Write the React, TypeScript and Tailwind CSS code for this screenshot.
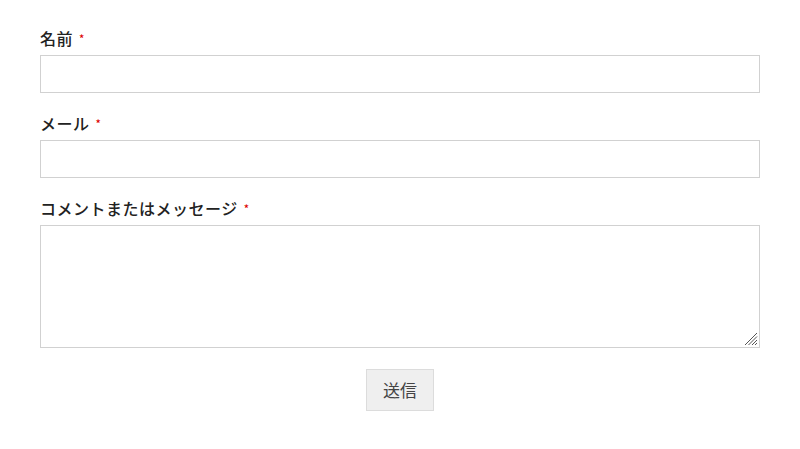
export default function App() {
  const font = { fontFamily: '"Noto Sans CJK JP", "Noto Sans", sans-serif' };
  return (
    <div className="min-h-[449px] bg-white px-10 pt-[26px]" style={font}>
      <form className="flex flex-col" onSubmit={(e) => e.preventDefault()}>
        <Label text="名前" />
        <input type="text" className="mb-[18px] h-[38px] w-full border border-[#d1d1d1] bg-white px-2 outline-none" />
        <Label text="メール" />
        <input type="email" className="mb-[18px] h-[38px] w-full border border-[#d1d1d1] bg-white px-2 outline-none" />
        <Label text="コメントまたはメッセージ" />
        <div className="relative">
          <textarea className="block h-[123px] w-full resize-none border border-[#d1d1d1] bg-white px-2 outline-none" />
          {/* resize grip */}
          <svg
            className="pointer-events-none absolute bottom-[2px] right-[2px]"
            width="14"
            height="14"
            viewBox="0 0 14 14"
            stroke="#555"
            strokeWidth="1"
          >
            <line x1="13" y1="1" x2="1" y2="13" />
            <line x1="13" y1="4.5" x2="4.5" y2="13" />
            <line x1="13" y1="8" x2="8" y2="13" />
            <line x1="13" y1="11" x2="11" y2="13" />
          </svg>
        </div>
        <div className="mt-[21px] flex justify-center">
          <button
            type="submit"
            className="h-[42px] w-[68px] border border-[#dcdcdc] bg-[#efefef] text-[17px] text-[#444]"
          >
            送信
          </button>
        </div>
      </form>
    </div>
  );
}

function Label({ text }: { text: string }) {
  return (
    <label className="mb-[5px] flex h-6 items-center text-[16px] font-medium leading-6 tracking-[0.5px] text-[#222]">
      {text}
      <span className="ml-[6px] text-[11px] text-[#d00]">*</span>
    </label>
  );
}
